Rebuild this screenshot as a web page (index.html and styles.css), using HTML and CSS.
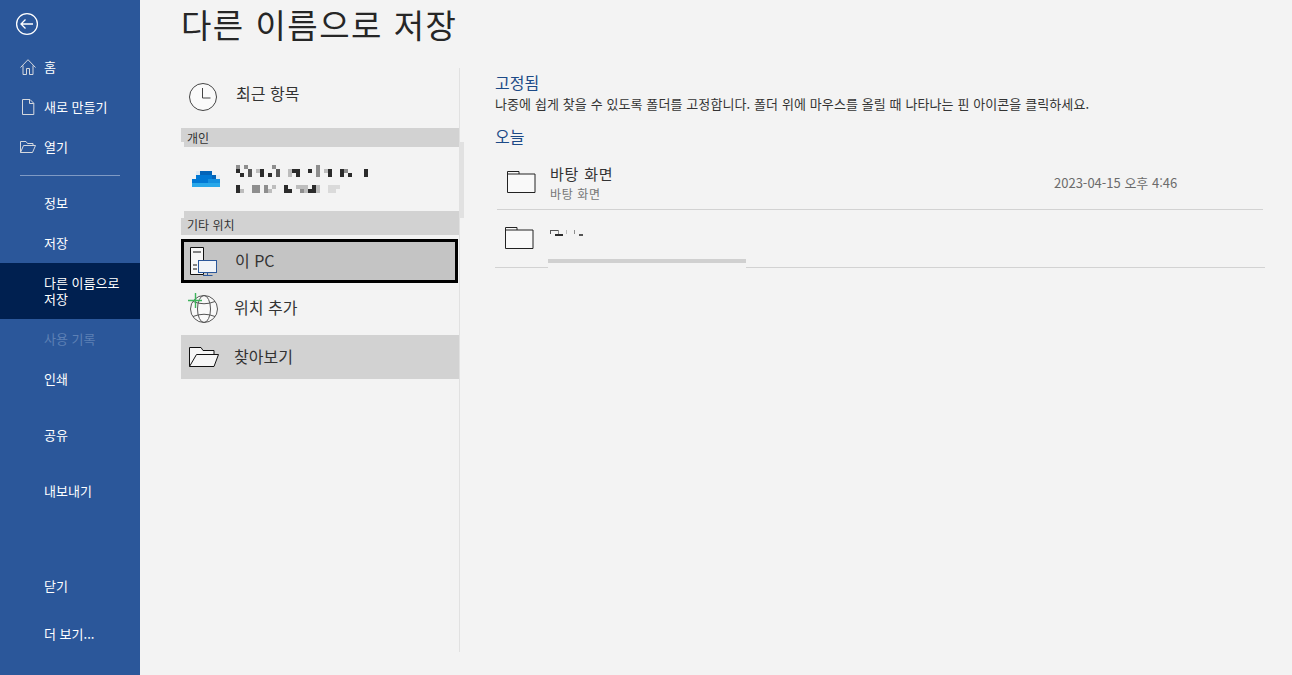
FILE: index.html
```html
<!DOCTYPE html>
<html lang="ko">
<head>
    <meta charset="UTF-8">
    <meta name="viewport" content="width=device-width, initial-scale=1.0">
    <title>다른 이름으로 저장</title>
    <link rel="stylesheet" href="styles.css">
</head>
<body>
    <div class="app">
        <!-- File menu -->
        <nav class="sidebar">
            <div class="back">
                <svg width="24" height="24" viewBox="0 0 24 24"><circle cx="12" cy="12" r="10.4"/><path d="M6 12h12M10.5 7.5L6 12l4.5 4.5"/></svg>
            </div>
            <div class="nav-item">
                <svg class="nav-icon" width="16" height="16" viewBox="0 0 16 16"><path d="M.5 8.500L8 .7l7.500 7.800M3 6.500v9h3.500V9.500h3v6H13v-9"/></svg>
                <span>홈</span>
            </div>
            <div class="nav-item">
                <svg class="nav-icon" width="16" height="16" viewBox="0 0 16 16"><path d="M2.500.5H10L13.800 4.300v11.200H2.500zM9.500.5v4h4.300"/></svg>
                <span>새로 만들기</span>
            </div>
            <div class="nav-item">
                <svg class="nav-icon" width="16" height="16" viewBox="0 0 16 16"><path d="M.5 13.500v-11h5.500l1.500 2h5.500v2M.5 13.500l3-7h12l-3 7z"/></svg>
                <span>열기</span>
            </div>
            <div class="nav-divider"></div>
            <div class="nav-item">정보</div>
            <div class="nav-item">저장</div>
            <div class="nav-item active">다른 이름으로 저장</div>
            <div class="nav-item disabled">사용 기록</div>
            <div class="nav-item">인쇄</div>
            <div class="nav-item spaced">공유</div>
            <div class="nav-item spaced">내보내기</div>
            <div class="nav-item bottom">닫기</div>
            <div class="nav-item last">더 보기...</div>
        </nav>

        <main class="content">
            <h1>다른 이름으로 저장</h1>
            <div class="columns">
                <!-- Locations -->
                <section class="places">
                    <div class="scroll-thumb"></div>
                    <div class="place recent">
                        <svg class="place-icon" width="30" height="30" viewBox="0 0 30 30"><circle cx="15" cy="15" r="13.500" fill="#fafafa"/><path d="M14.500 6v10h8"/></svg>
                        <span>최근 항목</span>
                    </div>
                    <div class="group-head personal">개인</div>
                    <div class="place account">
                        <svg class="cloud" width="28" height="16" viewBox="0 0 28 16">
                            <rect x="4" y="0" width="4" height="4" fill="#dfe9f3"/>
                            <rect x="8" y="0" width="12" height="4" fill="#0364b8"/>
                            <rect x="4" y="4" width="16" height="4" fill="#0078d4"/>
                            <rect x="20" y="4" width="4" height="4" fill="#0364b8"/>
                            <rect x="24" y="4" width="4" height="4" fill="#e3edf6"/>
                            <rect x="0" y="8" width="16" height="4" fill="#0078d4"/>
                            <rect x="16" y="8" width="12" height="4" fill="#1490df"/>
                            <rect x="0" y="12" width="28" height="4" fill="#28a8ea"/>
                        </svg>
                        <svg class="mosaic" width="132" height="28" viewBox="0 0 33 7" shape-rendering="crispEdges">
                            <g class="px-dark">
                                <rect x="0" y="1" width="1" height="1"/><rect x="6" y="1" width="1" height="1"/><rect x="14" y="1" width="2" height="1"/><rect x="18" y="1" width="1" height="1"/><rect x="23" y="1" width="1" height="1"/><rect x="26" y="1" width="1" height="1"/><rect x="32" y="1" width="1" height="2"/>
                                <rect x="1" y="2" width="1" height="1"/><rect x="6" y="2" width="1" height="1"/><rect x="8" y="2" width="1" height="1"/><rect x="15" y="2" width="1" height="1"/><rect x="23" y="2" width="1" height="1"/><rect x="26" y="2" width="1" height="1"/><rect x="28" y="2" width="1" height="1"/>
                                <rect x="0" y="5" width="1" height="2"/><rect x="12" y="5" width="1" height="2"/><rect x="13" y="6" width="1" height="1"/><rect x="19" y="5" width="1" height="2"/><rect x="18" y="6" width="1" height="1"/>
                            </g>
                            <g class="px-mid">
                                <rect x="3" y="1" width="1" height="2"/><rect x="10" y="1" width="1" height="2"/>
                            </g>
                            <g class="px-gray">
                                <rect x="0" y="0" width="1" height="1"/><rect x="2" y="0" width="1" height="1"/><rect x="9" y="0" width="1" height="1"/><rect x="20" y="0" width="1" height="3"/><rect x="27" y="1" width="1" height="1"/>
                                <rect x="4" y="5" width="2" height="2"/><rect x="7" y="5" width="1" height="2"/><rect x="16" y="6" width="1" height="1"/>
                            </g>
                            <g class="px-light">
                                <rect x="5" y="1" width="1" height="1"/><rect x="13" y="1" width="1" height="2"/><rect x="22" y="1" width="1" height="1"/>
                                <rect x="9" y="5" width="1" height="1"/><rect x="15" y="5" width="3" height="1"/><rect x="20" y="5" width="1" height="2"/><rect x="1" y="6" width="1" height="1"/><rect x="8" y="6" width="1" height="1"/><rect x="17" y="6" width="1" height="1"/>
                            </g>
                            <g class="px-faint">
                                <rect x="23" y="5" width="3" height="1"/><rect x="23" y="6" width="2" height="1"/>
                            </g>
                        </svg>
                    </div>
                    <div class="group-head other">기타 위치</div>
                    <div class="place selected">
                        <svg class="place-icon" width="30" height="30" viewBox="0 0 30 30">
                            <path class="tower" d="M1.500 1.500h13v27h-13zM4 6h8M4 19h4M4 23h4"/>
                            <rect x="9.500" y="14.500" width="18" height="12" class="screen"/>
                            <path class="stand" d="M18.500 26.500v3M14 29.500h9.500"/>
                        </svg>
                        <span>이 PC</span>
                    </div>
                    <div class="place add-place">
                        <svg class="place-icon" width="32" height="32" viewBox="0 0 32 32">
                            <circle cx="17" cy="18" r="13.500" fill="#f9f9f9"/>
                            <ellipse cx="17" cy="18" rx="6.500" ry="13.500"/>
                            <path d="M6 10.500Q17 15 28 10.500M6 25.500Q17 21 28 25.500"/>
                            <path class="plus" d="M8.500 2v15M1 9.500h14"/>
                        </svg>
                        <span>위치 추가</span>
                    </div>
                    <div class="place browse">
                        <svg class="place-icon" width="30" height="22" viewBox="0 0 30 22">
                            <path d="M.5 20.500V1.500H12l2 3h11v4" fill="#f6f6f6"/>
                            <path d="M.5 20.500L7.500 8.500h22L25 20.500z" fill="#f6f6f6"/>
                        </svg>
                        <span>찾아보기</span>
                    </div>
                </section>

                <!-- Folders -->
                <section class="folders">
                    <h2>고정됨</h2>
                    <p class="hint">나중에 쉽게 찾을 수 있도록 폴더를 고정합니다. 폴더 위에 마우스를 올릴 때 나타나는 핀 아이콘을 클릭하세요.</p>
                    <h2 class="today">오늘</h2>
                    <div class="folder-row first">
                        <svg class="folder" width="29" height="23" viewBox="0 0 29 23"><path d="M.5 21.500V.5h11.500v2.500h16v18.500zM.5 3h11.500"/></svg>
                        <div class="folder-text">
                            <div class="folder-name">바탕 화면</div>
                            <div class="folder-path">바탕 화면</div>
                        </div>
                        <div class="folder-date">2023-04-15 오후 4:46</div>
                    </div>
                    <div class="folder-row second">
                        <svg class="folder" width="29" height="23" viewBox="0 0 29 23"><path d="M.5 21.500V.5h11.500v2.500h16v18.500zM.5 3h11.500"/></svg>
                        <svg class="smudge" width="34" height="7" viewBox="0 0 34 7" shape-rendering="crispEdges">
                            <rect class="px-mid" x="0" y="0" width="8" height="1"/>
                            <rect class="px-mid" x="0" y="1" width="1" height="3"/>
                            <rect class="px-gray" x="8" y="0" width="1" height="4"/>
                            <rect class="px-dark" x="5" y="4" width="8" height="2"/>
                            <rect class="px-light" x="16" y="0" width="1" height="4"/>
                            <rect class="px-gray" x="24" y="0" width="1" height="4"/>
                            <rect class="px-mid" x="29" y="4" width="4" height="2"/>
                        </svg>
                        <div class="row-tear"></div>
                    </div>
                </section>
            </div>
        </main>
    </div>
</body>
</html>
```

FILE: styles.css
```css
* {
    box-sizing: border-box;
}

body {
    margin: 0;
    font-family: "Noto Sans CJK KR", "Noto Sans", sans-serif;
    background-color: #f3f3f3;
    color: #333;
}

svg {
    display: block;
    flex: none;
}

.app {
    display: flex;
    height: 675px;
    overflow: hidden;
}

/* File menu */
.sidebar {
    width: 140px;
    flex: none;
    display: flex;
    flex-direction: column;
    background-color: #2b579a;
    color: #fff;
    font-size: 13px;
    line-height: 16px;
}

.back {
    height: 47px;
    padding: 12px 0 0 15px;
}

.back svg {
    fill: none;
    stroke: #fff;
    stroke-width: 1.3;
}

.nav-item {
    display: flex;
    align-items: center;
    min-height: 40px;
    padding: 0 16px 0 44px;
    position: relative;
}

.nav-icon {
    position: absolute;
    left: 20px;
    top: 12px;
    fill: none;
    stroke: #d5d8de;
}

.nav-divider {
    height: 1px;
    margin: 8px 20px 7px;
    background-color: #7f9ac4;
}

.nav-item.active {
    min-height: 56px;
    background-color: #002050;
}

.nav-item.disabled {
    color: #5d80b5;
}

.nav-item.spaced {
    margin-top: 16px;
}

.nav-item.bottom {
    margin-top: auto;
}

.nav-item.last {
    margin: 8px 0 21px;
}

/* Main area */
.content {
    flex: 1;
    padding-left: 41px;
}

h1 {
    margin: 0;
    height: 68px;
    font-size: 33px;
    font-weight: 400;
    line-height: 49px;
    letter-spacing: 1.5px;
    color: #262626;
    white-space: nowrap;
}

.columns {
    display: flex;
}

.places {
    position: relative;
    width: 279px;
    height: 584px;
    border-right: 1px solid #e1e1e1;
}

.scroll-thumb {
    position: absolute;
    left: 279px;
    top: 74px;
    width: 4px;
    height: 76px;
    background-color: #e1e1e1;
}

.place {
    display: flex;
    align-items: center;
    font-size: 16px;
    color: #333;
}

.place svg.place-icon {
    fill: none;
    stroke: #333;
}

.place.recent {
    height: 60px;
    padding: 0 0 0 7px;
}

.place.recent .place-icon {
    stroke: #444;
    margin: 0 18px 3px 0;
}

.place.recent span {
    margin-bottom: 10px;
}

.group-head {
    font-size: 12px;
    color: #333;
    padding-left: 6px;
}

.group-head.personal {
    height: 19px;
    line-height: 19px;
    background: linear-gradient(#d2d2d2, #d2d2d2) 0 0 / 100% 14px no-repeat,
                linear-gradient(#d2d2d2, #d2d2d2) 3px 14px / 100% 5px no-repeat;
}

.group-head.other {
    height: 24px;
    line-height: 28px;
    background: linear-gradient(#d2d2d2, #d2d2d2) 3px 0 / 100% 7px no-repeat,
                linear-gradient(#d2d2d2, #d2d2d2) 0 7px / 100% 17px no-repeat;
}

.place.account {
    height: 64px;
    padding-left: 11px;
}

.mosaic {
    margin: 0 0 0 16px;
}

.px-dark {
    fill: #2b2b2b;
}

.px-mid {
    fill: #555;
}

.px-gray {
    fill: #8e8e8e;
}

.px-light {
    fill: #bdbdbd;
}

.px-faint {
    fill: #dadada;
}

.place.selected {
    height: 44px;
    width: 277px;
    margin-top: 4px;
    padding-left: 5px;
    border: 3px solid #000;
    background-color: #c4c4c4;
}

.place.selected .place-icon {
    margin-right: 16px;
}

.place.selected span {
    margin-bottom: 2px;
}

.place svg .tower {
    stroke: #111;
    fill: #f7f7f7;
}

.place svg .screen {
    fill: #f1f4f8;
    stroke: #2b579a;
}

.place svg .stand {
    stroke: #2b579a;
}

.place.add-place {
    height: 44px;
    margin-top: 4px;
    padding-left: 6px;
}

.place.add-place .place-icon {
    margin: 0 15px 4px 0;
    stroke: #555;
}

.place.add-place span {
    margin-bottom: 4px;
}

.place svg .plus {
    stroke: #3db45c;
    stroke-width: 1.4;
}

.place.browse {
    height: 44px;
    margin-top: 4px;
    padding-left: 8px;
    background-color: #d2d2d2;
}

.place.browse .place-icon {
    margin-right: 15px;
    stroke: #111;
}

.place.browse span {
    margin-bottom: 2px;
}

/* Folder list */
.folders {
    flex: 1;
    margin-left: 35px;
    padding-right: 27px;
    position: relative;
}

h2 {
    margin: 0;
    padding-top: 4px;
    font-size: 16px;
    font-weight: 400;
    line-height: 20px;
    color: #1c4a87;
}

h2.today {
    padding-top: 12px;
}

.hint {
    margin: 2px 0 0;
    font-size: 13px;
    letter-spacing: 0.1px;
    line-height: 20px;
    color: #333;
    white-space: nowrap;
}

.folder-row {
    display: flex;
    align-items: center;
    position: relative;
}

.folder {
    fill: #f9f9f9;
    stroke: #222;
}

.folder-row.first {
    height: 57px;
    margin: 7px 2px 0;
    padding: 3px 0 0 10px;
    border-bottom: 1px solid #d2d2d2;
}

.folder-row.second {
    height: 58px;
    padding-left: 10px;
    border-bottom: 1px solid #d2d2d2;
}

.folder-text {
    margin-left: 14px;
}

.folder-name {
    font-size: 15px;
    letter-spacing: 0.8px;
    line-height: 22px;
    color: #333;
}

.folder-path {
    font-size: 12px;
    letter-spacing: 0.6px;
    line-height: 18px;
    color: #767676;
}

.folder-date {
    margin-left: auto;
    width: 209px;
    font-size: 13px;
    color: #6b6b6b;
}

.smudge {
    margin: -10px 0 0 16px;
}

.row-tear {
    position: absolute;
    left: 53px;
    bottom: -1px;
    width: 198px;
    height: 9px;
    background-color: #f3f3f3;
    border-top: 4px solid #d0d0d0;
}
```
